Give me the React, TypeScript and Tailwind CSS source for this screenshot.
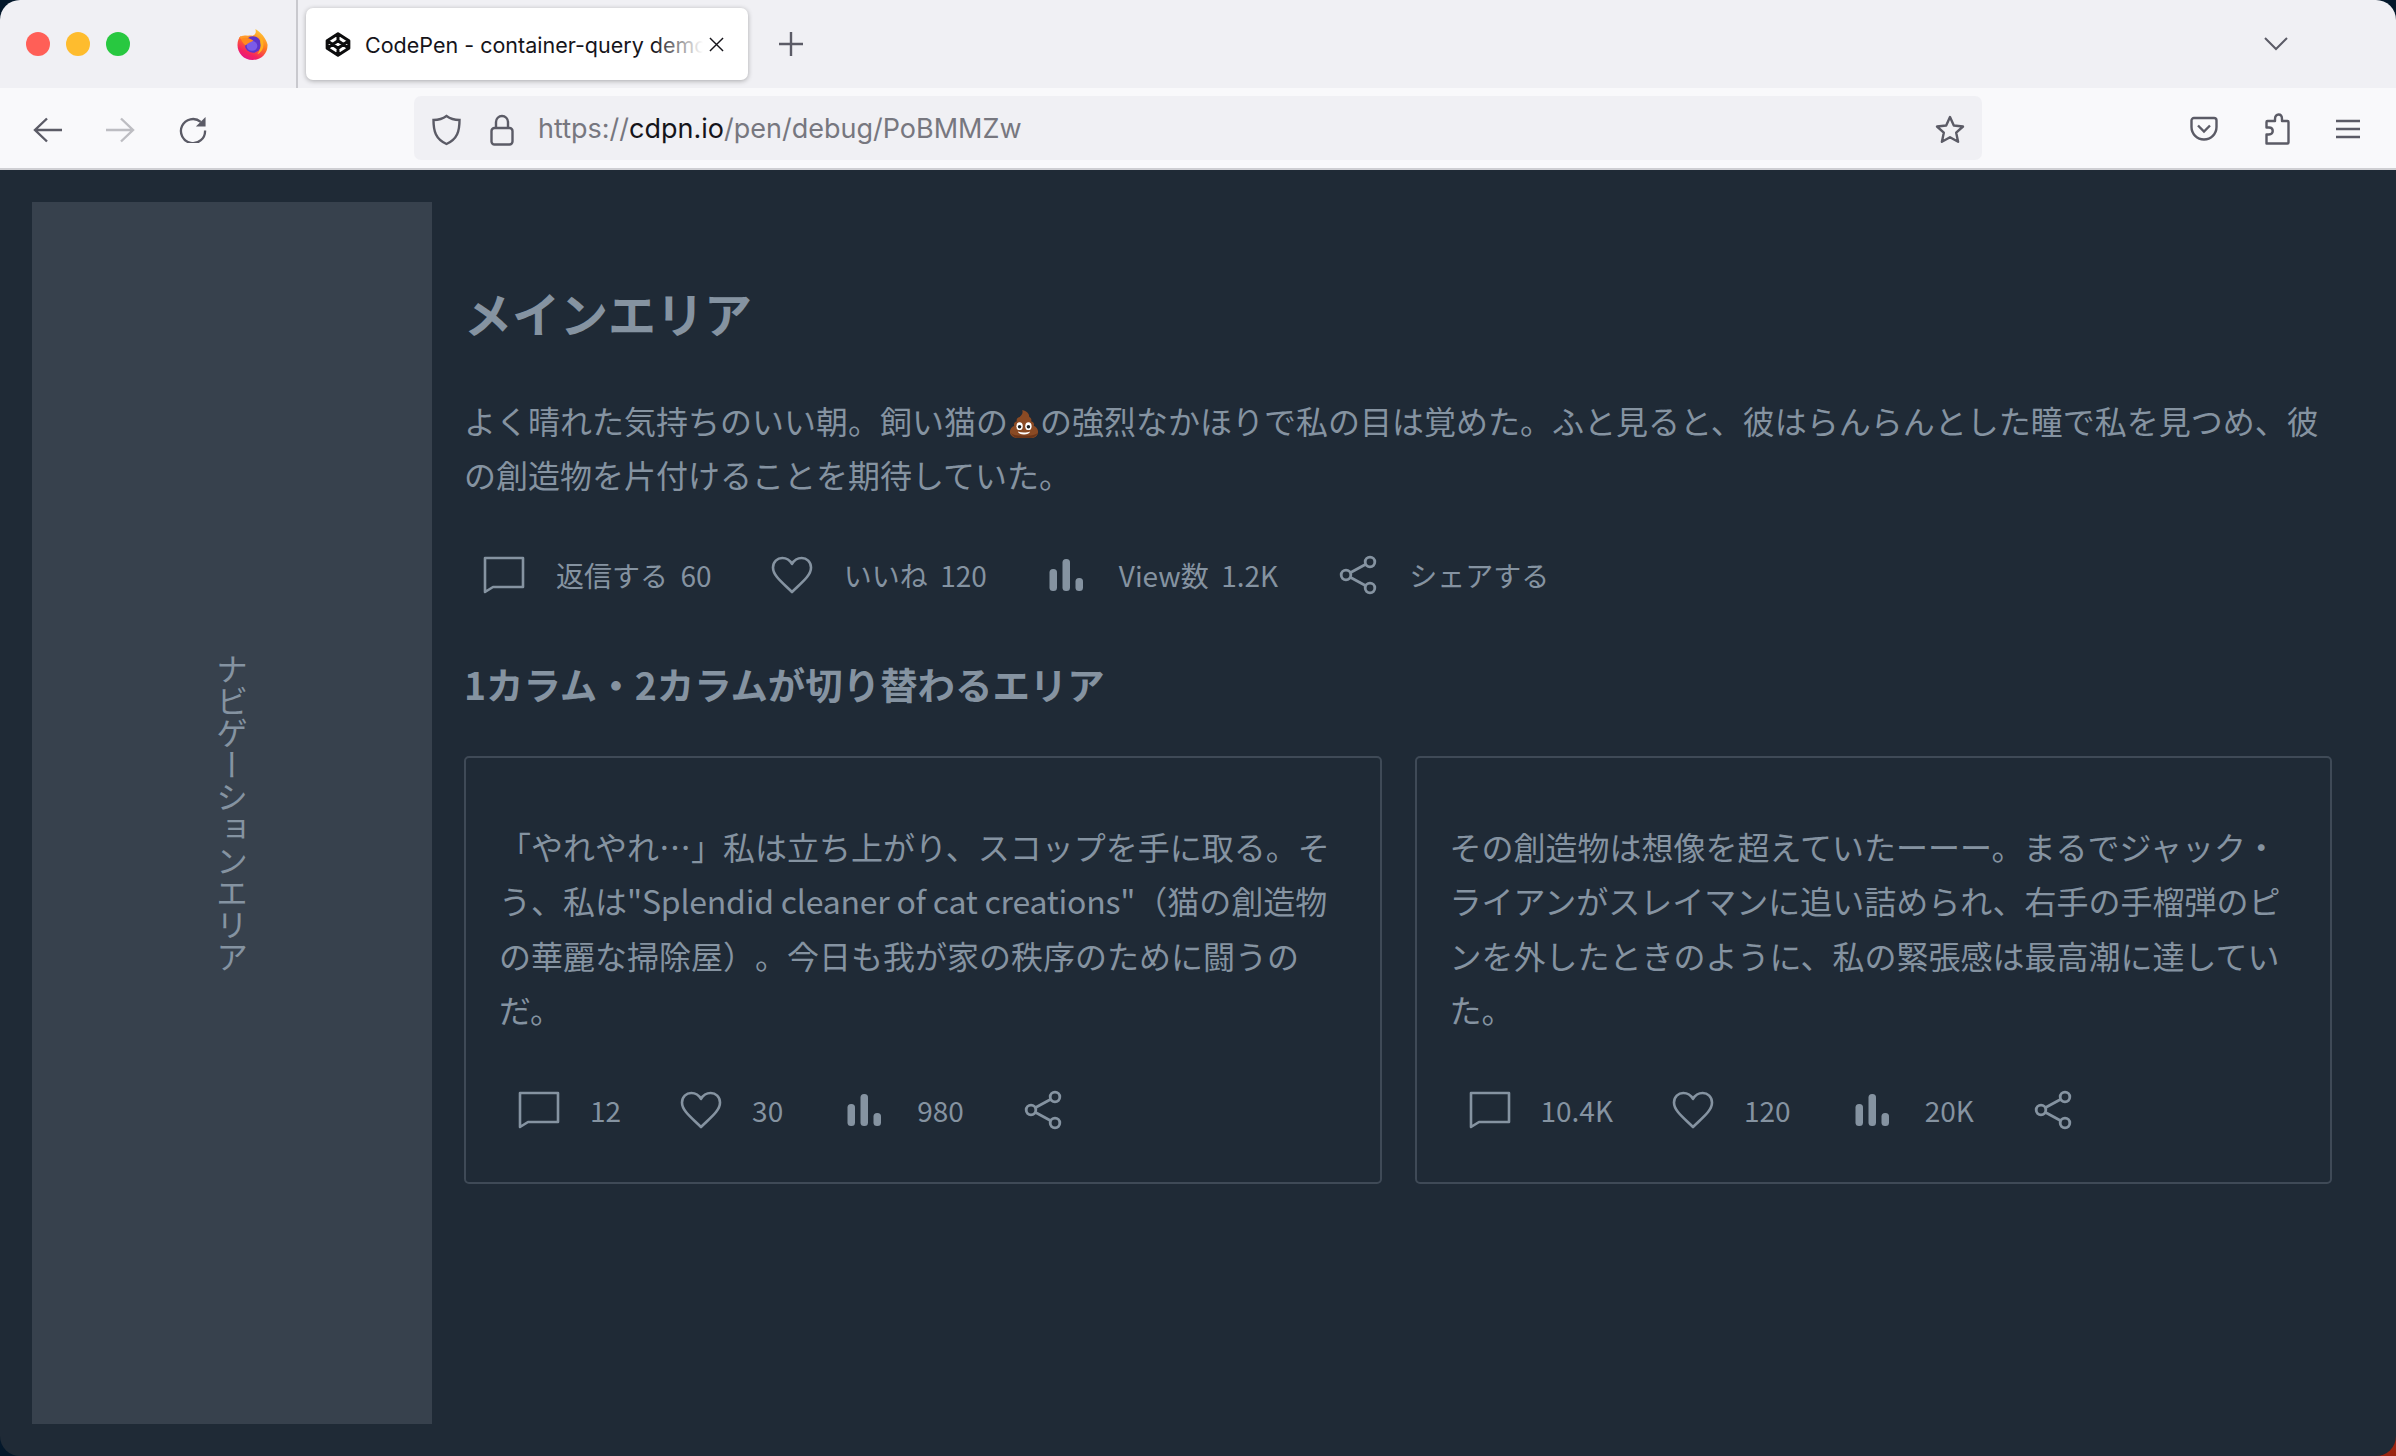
import type { ReactNode } from "react";

function CommentIcon({ className }: { className?: string }) {
  return (
    <svg viewBox="0 0 42 38" className={className} fill="none" stroke="#8593a1" strokeWidth="2.6">
      <path d="M2 2h38v29H10l-8 5z" strokeLinejoin="round" />
    </svg>
  );
}

function HeartIcon({ className }: { className?: string }) {
  return (
    <svg viewBox="0 0 42 38" className={className} fill="none" stroke="#8593a1" strokeWidth="2.6">
      <path d="M21 36C12 27 2 20 2 11.500 2 5.800 6.300 2 11.300 2 15.500 2 19 4.300 21 8c2-3.700 5.500-6 9.700-6C35.700 2 40 5.800 40 11.500 40 20 30 27 21 36z" strokeLinejoin="round" />
    </svg>
  );
}

function BarsIcon({ className }: { className?: string }) {
  return (
    <svg viewBox="0 0 34 32" className={className} fill="#8593a1">
      <rect x="0.500" y="10" width="7.500" height="22" rx="3.500" />
      <rect x="13.500" y="0" width="7.500" height="32" rx="3.500" />
      <rect x="26.500" y="19" width="7.500" height="13" rx="3.500" />
    </svg>
  );
}

function ShareIcon({ className }: { className?: string }) {
  return (
    <svg viewBox="0 0 38 40" className={className} fill="none" stroke="#8593a1" strokeWidth="2.8">
      <circle cx="31" cy="7" r="4.800" />
      <circle cx="7" cy="20" r="4.800" />
      <circle cx="31" cy="33" r="4.800" />
      <path d="M11.200 17.700 26.800 9.300M11.200 22.300l15.600 8.400" />
    </svg>
  );
}

function PooIcon() {
  return (
    <svg viewBox="-2 -1 36 34" className="inline-block h-[30px] w-[32px] align-[-5px]">
      <path d="M14 0c5 1 8 4 8 8 2 1 3 3 2 5 3 1 4 3 3 5 3 1 5 4 5 7 0 4-4 7-8 7H9c-4 0-9-3-9-7 0-3 2-6 5-7-1-2 0-4 3-5-1-2 0-4 3-5 3-2 4-5 3-8z" fill="#8a4a24" />
      <path d="M1 26c2 4 6 6 8 6h14c3 0 7-2 9-6-3 2-6 3-9 3H9c-3 0-6-1-8-3z" fill="#6b3519" />
      <ellipse cx="11" cy="18.500" rx="3.600" ry="4.400" fill="#fff" />
      <ellipse cx="21" cy="18.500" rx="3.600" ry="4.400" fill="#fff" />
      <circle cx="11" cy="19" r="2" fill="#222" />
      <circle cx="21" cy="19" r="2" fill="#222" />
      <path d="M9 24.500c4 1.500 10 1.500 14 0-1 4.500-13 4.500-14 0z" fill="#fff" />
    </svg>
  );
}

function FirefoxIcon() {
  return (
    <svg viewBox="0 0 32 32" className="ml-[107px] h-[31px] w-[31px]">
      <defs>
        <linearGradient id="fx" x1="0.800" y1="0" x2="0.300" y2="1">
          <stop offset="0" stopColor="#ffd43a" />
          <stop offset="0.450" stopColor="#ff7a1f" />
          <stop offset="0.800" stopColor="#f5245f" />
          <stop offset="1" stopColor="#e31587" />
        </linearGradient>
      </defs>
      <path d="M19 0c5 3 11 9 12.500 16C32 25 25 32 16 32 7 32 .5 25 .5 16.500.5 12 2 9 4 7c-.3 2 .5 3 1.500 4C8 7 12 6 16 7c3-1 4-3 3-7z" fill="url(#fx)" />
      <path d="M2 9c3-3 8-3 11-1l3 3-6 2z" fill="#ff9a2a" />
      <circle cx="16.500" cy="16" r="8.500" fill="#5f34c9" />
      <ellipse cx="15.500" cy="17.500" rx="5.500" ry="5" fill="#7b5be8" />
      <path d="M4 10c4-2 9-1 13 2l-4 2c-2 1-3 2-4 3-2-1-4-4-5-7z" fill="#ff8a1f" />
      <path d="M24 7c3 3 4 8 3 12-1 3-3 6-6 7 3-4 4-8 3-12z" fill="#ffb01f" />
    </svg>
  );
}

function Stat({ icon, label, gap }: { icon: ReactNode; label?: string; gap: string }) {
  return (
    <div className={`flex items-center ${gap}`}>
      {icon}
      {label && <span className="whitespace-pre text-[28px] leading-none text-[#8593a1]">{label}</span>}
    </div>
  );
}

function CardStats({ a, b, c }: { a: string; b: string; c: string }) {
  return (
    <div className="mt-[54px] flex items-center pl-[19px]">
      <Stat gap="gap-[30px]" label={a} icon={<CommentIcon className="h-[38px] w-[42px]" />} />
      <div className="ml-[59px]">
        <Stat gap="gap-[30px]" label={b} icon={<HeartIcon className="h-[38px] w-[42px]" />} />
      </div>
      <div className="ml-[64px]">
        <Stat gap="gap-[36px]" label={c} icon={<BarsIcon className="h-[32px] w-[34px]" />} />
      </div>
      <div className="ml-[60px]">
        <Stat gap="gap-0" icon={<ShareIcon className="h-[40px] w-[38px]" />} />
      </div>
    </div>
  );
}

function Card({ children, stats }: { children: ReactNode; stats: [string, string, string] }) {
  return (
    <div className="h-[428px] rounded-[5px] border-2 border-[#3f4a57] px-[33px] pt-[61px]">
      <p className="text-[32px] leading-[54.400px] text-[#8593a1] [text-spacing-trim:space-all]">{children}</p>
      <CardStats a={stats[0]} b={stats[1]} c={stats[2]} />
    </div>
  );
}

function BrowserChrome() {
  return (
    <div className="font-['Inter','Liberation_Sans',sans-serif]">
      <div className="flex h-[88px] items-stretch bg-[#f0f0f4]">
        <div className="flex w-[298px] items-center border-r-2 border-[#c9c9ce] pl-[26px]">
          <div className="flex gap-[16px]">
            <span className="h-[24px] w-[24px] rounded-full bg-[#ff5f57]" />
            <span className="h-[24px] w-[24px] rounded-full bg-[#febc2e]" />
            <span className="h-[24px] w-[24px] rounded-full bg-[#28c840]" />
          </div>
          <FirefoxIcon />
        </div>
        <div className="ml-[8px] mt-[8px] flex h-[72px] w-[442px] items-center rounded-[7px] bg-white pl-[19px] shadow-[0_1px_5px_rgba(0,0,0,0.3)]">
          <svg viewBox="0 0 24 24" className="h-[27px] w-[26px] shrink-0" fill="none" stroke="#0c0c0d" strokeWidth="2.800" strokeLinejoin="round">
            <path d="M12 2 22 8.500v7L12 22 2 15.500v-7zM12 22v-6.500M22 8.500l-10 7-10-7M2 15.500l10-7 10 7M12 2v6.500" />
          </svg>
          <span className="relative ml-[14px] mt-[2px] w-[338px] overflow-hidden whitespace-nowrap text-[21.500px] text-[#15141a]">
            CodePen - container-query demo
            <span className="absolute inset-y-0 right-0 w-[50px] bg-linear-to-r from-white/0 to-white" />
          </span>
          <svg viewBox="0 0 16 16" className="ml-[6px] h-[15px] w-[15px] shrink-0" fill="none" stroke="#15141a" strokeWidth="1.500">
            <path d="M1 1l14 14M15 1 1 15" />
          </svg>
        </div>
        <div className="ml-[31px] flex items-center">
          <svg viewBox="0 0 24 24" className="h-[24px] w-[24px]" fill="none" stroke="#5b5b66" strokeWidth="2.400">
            <path d="M12 0v24M0 12h24" />
          </svg>
        </div>
        <div className="ml-auto mr-[108px] flex items-center">
          <svg viewBox="0 0 24 14" className="h-[14px] w-[24px]" fill="none" stroke="#5b5b66" strokeWidth="2">
            <path d="M1 1l11 11L23 1" />
          </svg>
        </div>
      </div>
      <div className="flex h-[82px] items-center border-b-2 border-[#cfcfd3] bg-[#f9f9fb]">
        <div className="ml-[33px] mt-[3px] flex items-center gap-[44px]">
          <svg viewBox="0 0 29 26" className="h-[26px] w-[29px]" fill="none" stroke="#5b5b66" strokeWidth="2.400">
            <path d="M29 13H2M14 1.500 2 13l12 11.500" />
          </svg>
          <svg viewBox="0 0 29 26" className="h-[26px] w-[29px]" fill="none" stroke="#bdbdc2" strokeWidth="2.400">
            <path d="M0 13h27M15 1.500 27 13 15 24.500" />
          </svg>
          <svg viewBox="0 0 28 28" className="h-[27px] w-[28px]" fill="none" stroke="#5b5b66" strokeWidth="2.400">
            <path d="M22 6A12.500 12.500 0 1 0 26.500 15" />
            <path d="M27 1v10H17z" fill="#5b5b66" stroke="none" />
          </svg>
        </div>
        <div className="ml-[207px] flex h-[64px] w-[1568px] items-center rounded-[7px] bg-[#f0f0f4] pl-[17px]">
          <svg viewBox="0 0 30 32" className="mt-[3px] h-[32px] w-[31px]" fill="none" stroke="#5b5b66" strokeWidth="2.400">
            <path d="M15 2c4 3 8 4 13 4 0 11-2 19-13 24C4 25 2 17 2 6c5 0 9-1 13-4z" />
          </svg>
          <svg viewBox="0 0 24 32" className="ml-[28px] mt-[3px] h-[32px] w-[24px]" fill="none" stroke="#5b5b66" strokeWidth="2.400">
            <rect x="1.500" y="14" width="21" height="16.500" rx="3" />
            <path d="M6 14V8a6 6 0 0 1 12 0v6" />
          </svg>
          <span className="ml-[24px] mt-[3px] text-[27px] text-[#77777f]">
            https://<span className="text-[#15141a]">cdpn.io</span>/pen/debug/PoBMMZw
          </span>
          <svg viewBox="0 0 30 30" className="ml-auto mr-[17px] mt-[3px] h-[30px] w-[30px]" fill="none" stroke="#5b5b66" strokeWidth="2.400" strokeLinejoin="round">
            <path d="m15 2 3.800 8.500 9.200 1-6.800 6.200 1.900 9.100-8.100-4.600-8.100 4.600 1.900-9.100L2 11.500l9.200-1z" />
          </svg>
        </div>
        <div className="ml-[208px] mt-[2px] flex items-center gap-[46px]">
          <svg viewBox="0 0 28 26" className="h-[26px] w-[28px]" fill="none" stroke="#5b5b66" strokeWidth="2.400">
            <path d="M4 2h20a2.500 2.500 0 0 1 2.500 2.500V11a12.500 12.500 0 0 1-25 0V4.500A2.500 2.500 0 0 1 4 2z" />
            <path d="m8 9.500 6 6 6-6" />
          </svg>
          <svg viewBox="0 0 26 32" className="h-[32px] w-[26px]" fill="none" stroke="#5b5b66" strokeWidth="2.400" strokeLinejoin="round">
            <path d="M11 6c0-6 7-6 7 0v2h5.500a1 1 0 0 1 1 1v20.500a1 1 0 0 1-1 1H2.500v-9H5c5 0 5-7 0-7H2.500V9a1 1 0 0 1 1-1H11z" />
          </svg>
          <svg viewBox="0 0 24 20" className="h-[20px] w-[24px]" fill="none" stroke="#5b5b66" strokeWidth="2.400">
            <path d="M0 2h24M0 10h24M0 18h24" />
          </svg>
        </div>
      </div>
    </div>
  );
}

export default function App() {
  return (
    <div className="h-[1456px] w-[2396px] overflow-hidden bg-[linear-gradient(135deg,#04182b_85%,#9a2410_85%)] font-['Noto_Sans_CJK_JP',sans-serif]">
      <div className="flex h-full flex-col overflow-hidden rounded-[20px]">
        <BrowserChrome />
        <div className="flex flex-1 gap-[32px] bg-[#1f2a36] pb-[32px] pl-[32px] pr-[64px] pt-[32px]">
          <aside className="flex w-[400px] shrink-0 items-center justify-center bg-[#37414d]">
            <span className="text-[32px] text-[#8593a1] [writing-mode:vertical-rl]">ナビゲーションエリア</span>
          </aside>
          <main className="min-w-0 flex-1 pt-[78px]">
            <h1 className="text-[48px] font-bold leading-[64px] text-[#8593a1]">メインエリア</h1>
            <p className="mt-[49px] text-[32px] leading-[54.400px] text-[#8593a1] [text-spacing-trim:space-all]">
              よく晴れた気持ちのいい朝。飼い猫の
              <PooIcon />
              の強烈なかほりで私の目は覚めた。ふと見ると、彼はらんらんとした瞳で私を見つめ、彼の創造物を片付けることを期待していた。
            </p>
            <div className="mt-[53px] flex items-center pl-[19px]">
              <Stat gap="gap-[31px]" label="返信する  60" icon={<CommentIcon className="h-[38px] w-[42px]" />} />
              <div className="ml-[59px]">
                <Stat gap="gap-[31px]" label="いいね  120" icon={<HeartIcon className="h-[38px] w-[42px]" />} />
              </div>
              <div className="ml-[62px]">
                <Stat gap="gap-[36px]" label="View数  1.2K" icon={<BarsIcon className="h-[32px] w-[34px]" />} />
              </div>
              <div className="ml-[61px]">
                <Stat gap="gap-[32px]" label="シェアする" icon={<ShareIcon className="h-[40px] w-[38px]" />} />
              </div>
            </div>
            <h2 className="mt-[63px] text-[37.440px] font-bold leading-[52px] text-[#8593a1]">1カラム・2カラムが切り替わるエリア</h2>
            <div className="mt-[46px] grid grid-cols-2 gap-[33px]">
              <Card stats={["12", "30", "980"]}>
                「やれやれ…」私は立ち上がり、スコップを手に取る。そう、私は
                <span className="tracking-[-0.23px]">"Splendid cleaner of cat creations"</span>
                （猫の創造物の華麗な掃除屋）。今日も我が家の秩序のために闘うのだ。
              </Card>
              <Card stats={["10.4K", "120", "20K"]}>
                その創造物は想像を超えていたーーー。まるでジャック・ライアンがスレイマンに追い詰められ、右手の手榴弾のピンを外したときのように、私の緊張感は最高潮に達していた。
              </Card>
            </div>
          </main>
        </div>
      </div>
    </div>
  );
}
